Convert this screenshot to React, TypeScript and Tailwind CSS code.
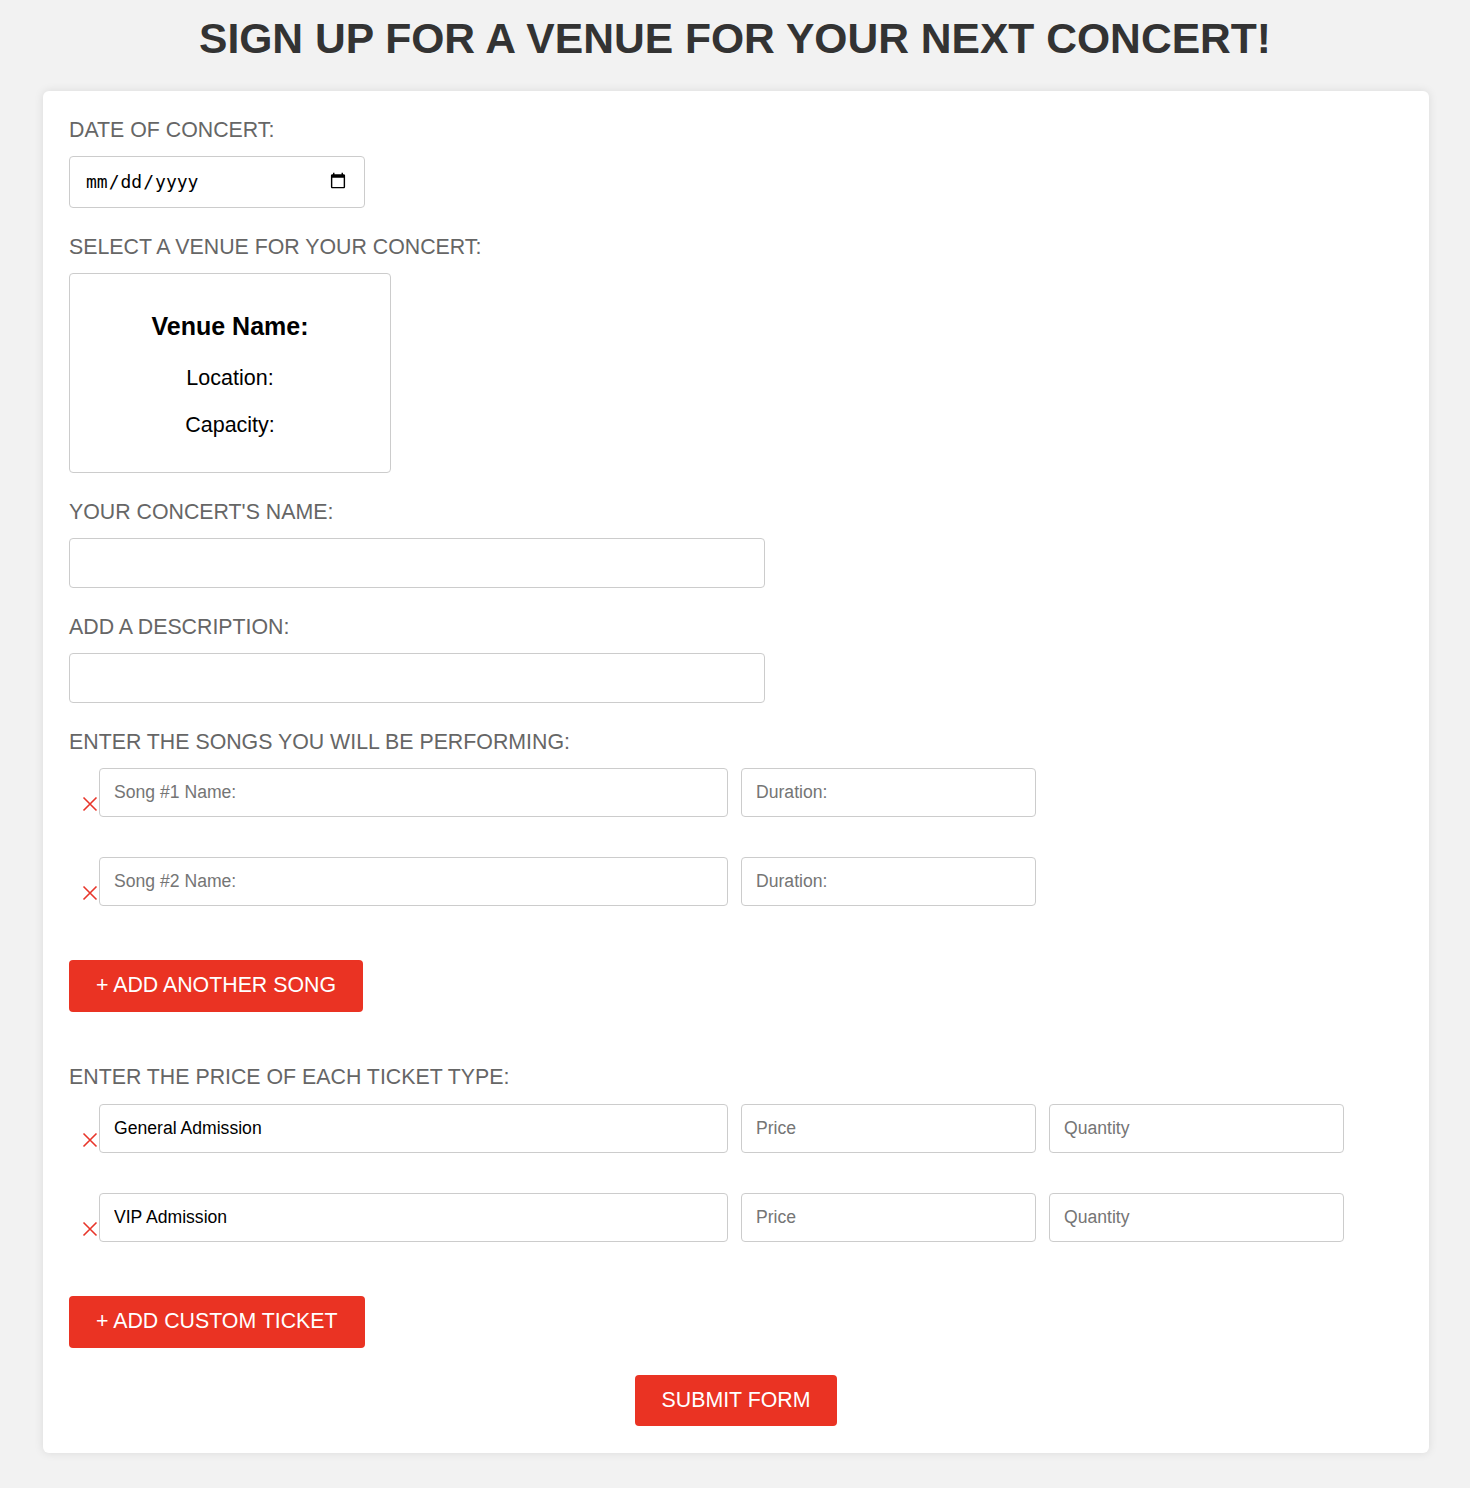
const font = { fontFamily: '"Liberation Sans", Arial, sans-serif' };

function RemoveX() {
  return (
    <button type="button" className="w-[30px] shrink-0 flex justify-end pr-[1px] mb-[5px] self-end">
      <svg width="16" height="16" viewBox="0 0 16 16" fill="none" stroke="#e8352a" strokeWidth="1.6">
        <path d="M1.5 1.5 L14.5 14.5 M14.5 1.5 L1.5 14.5" />
      </svg>
    </button>
  );
}

function Field({ placeholder, value, width }: { placeholder: string; value?: string; width: string }) {
  return (
    <input
      type="text"
      placeholder={placeholder}
      defaultValue={value}
      className={`${width} h-[49px] rounded-[4px] border border-[#ccc] bg-white px-[14px] text-[17.6px] text-black placeholder:text-[#757575] outline-none`}
    />
  );
}

function Label({ children }: { children: React.ReactNode }) {
  return <div className="text-[21.33px] leading-[24px] uppercase text-[#666] mb-[14px]">{children}</div>;
}

function RedButton({ children }: { children: React.ReactNode }) {
  return (
    <button
      type="button"
      className="h-[52px] px-[27px] rounded-[4px] bg-[#ea3323] text-white text-[21.33px] uppercase"
    >
      {children}
    </button>
  );
}

export default function App() {
  const songs = ["Song #1 Name:", "Song #2 Name:"];
  const tickets = ["General Admission", "VIP Admission"];

  return (
    <div className="min-h-screen bg-[#f2f2f2] pb-[35px]" style={font}>
      <h1 className="pt-[14px] pb-[29px] text-center text-[42.6px] leading-[48px] font-bold uppercase text-[#333]">
        Sign up for a venue for your next concert!
      </h1>

      <div className="ml-[43px] mr-[41px] bg-white rounded-[6px] shadow-[0_0_10px_rgba(0,0,0,0.1)] px-[26px] pt-[27px] pb-[27px]">
        <Label>Date of concert:</Label>
        <input
          type="date"
          className="w-[296px] h-[52px] rounded-[4px] border border-[#ccc] px-[15px] pb-[2px] text-[18px] text-black outline-none"
          style={{ fontFamily: '"DejaVu Sans Mono", "Liberation Mono", monospace' }}
        />

        <div className="mt-[27px]">
          <Label>Select a venue for your concert:</Label>
          <div className="w-[322px] h-[200px] rounded-[4px] border border-[#ccc] flex flex-col items-center pt-[38px] text-black">
            <div className="text-[25px] leading-[28px] font-bold">Venue Name:</div>
            <div className="text-[21.5px] leading-[24px] mt-[26px]">Location:</div>
            <div className="text-[21.5px] leading-[24px] mt-[23px]">Capacity:</div>
          </div>
        </div>

        <div className="mt-[27px]">
          <Label>Your concert's name:</Label>
          <input type="text" className="w-[696px] h-[50px] rounded-[4px] border border-[#ccc] px-[14px] text-[17.6px] outline-none" />
        </div>

        <div className="mt-[27px]">
          <Label>Add a description:</Label>
          <input type="text" className="w-[696px] h-[50px] rounded-[4px] border border-[#ccc] px-[14px] text-[17.6px] outline-none" />
        </div>

        <div className="mt-[27px]">
          <Label>Enter the songs you will be performing:</Label>
          <div className="flex flex-col gap-[40px]">
            {songs.map((s) => (
              <div key={s} className="flex items-end gap-[13px]">
                <div className="flex items-end">
                  <RemoveX />
                  <Field placeholder={s} width="w-[629px]" />
                </div>
                <Field placeholder="Duration:" width="w-[295px]" />
              </div>
            ))}
          </div>
          <div className="mt-[54px]">
            <RedButton>+ Add another song</RedButton>
          </div>
        </div>

        <div className="mt-[53px]">
          <div className="text-[21.33px] leading-[24px] uppercase text-[#666] mb-[15px]">Enter the price of each ticket type:</div>
          <div className="flex flex-col gap-[40px]">
            {tickets.map((t) => (
              <div key={t} className="flex items-end gap-[13px]">
                <div className="flex items-end">
                  <RemoveX />
                  <Field placeholder="Ticket Name" value={t} width="w-[629px]" />
                </div>
                <Field placeholder="Price" width="w-[295px]" />
                <Field placeholder="Quantity" width="w-[295px]" />
              </div>
            ))}
          </div>
          <div className="mt-[54px]">
            <RedButton>+ Add custom ticket</RedButton>
          </div>
        </div>

        <div className="mt-[27px] flex justify-center">
          <button type="button" className="h-[51px] px-[27px] rounded-[4px] bg-[#ea3323] text-white text-[21.33px] uppercase">
            Submit form
          </button>
        </div>
      </div>
    </div>
  );
}
